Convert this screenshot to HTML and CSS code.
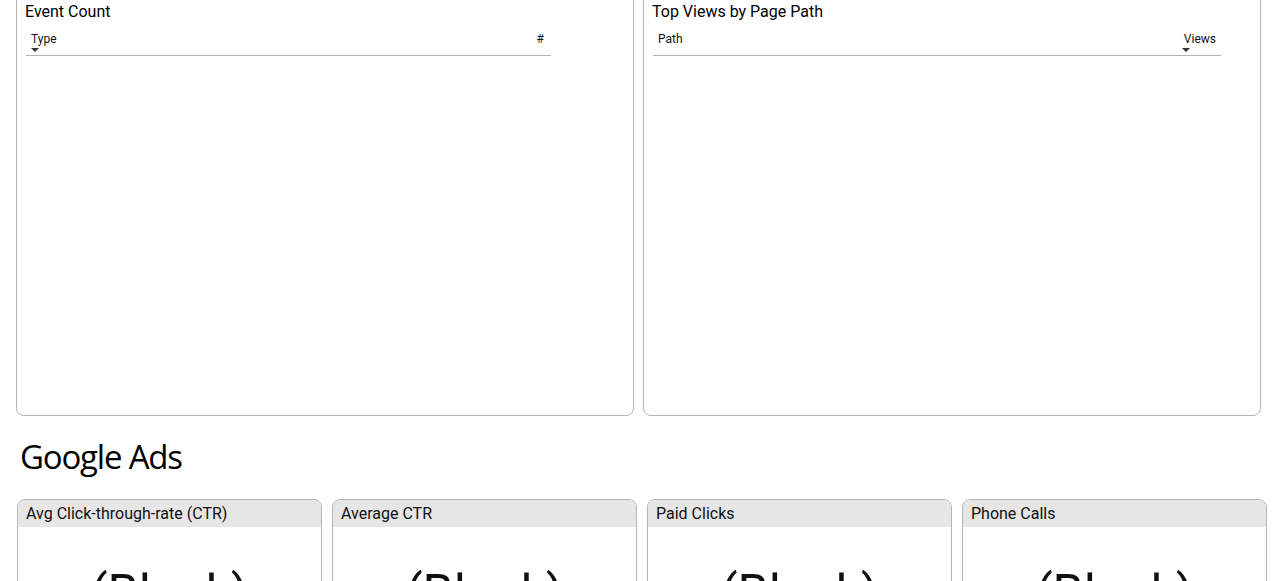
FILE: index.html
```html
<!DOCTYPE html>
<html lang="en">

<head>
    <meta charset="UTF-8">
    <meta name="viewport" content="width=device-width, initial-scale=1.0">
    <title>Dashboard</title>
    <link rel="stylesheet" href="styles.css">
</head>

<body>
    <div class="page">
        <div class="panels">
            <div class="panel">
                <h3 class="panel-title">Event Count</h3>
                <table class="grid grid-events">
                    <thead>
                        <tr>
                            <th class="sorted">Type</th>
                            <th class="num">#</th>
                        </tr>
                    </thead>
                </table>
            </div>
            <div class="panel">
                <h3 class="panel-title">Top Views by Page Path</h3>
                <table class="grid grid-views">
                    <thead>
                        <tr>
                            <th>Path</th>
                            <th class="num sorted">Views</th>
                        </tr>
                    </thead>
                </table>
            </div>
        </div>

        <h2 class="section-heading">Google Ads</h2>

        <div class="cards">
            <div class="card">
                <div class="card-header">Avg Click-through-rate (CTR)</div>
                <div class="card-value">(Blank)</div>
            </div>
            <div class="card">
                <div class="card-header">Average CTR</div>
                <div class="card-value">(Blank)</div>
            </div>
            <div class="card">
                <div class="card-header">Paid Clicks</div>
                <div class="card-value">(Blank)</div>
            </div>
            <div class="card">
                <div class="card-header">Phone Calls</div>
                <div class="card-value">(Blank)</div>
            </div>
        </div>
    </div>
</body>

</html>
```

FILE: styles.css
```css
body {
    margin: 0;
    padding: 0;
    background-color: #fff;
    font-family: Roboto, "Liberation Sans", sans-serif;
    color: #111;
    overflow: hidden;
}

.page {
    margin-top: -7px;
    padding: 0 21px 0 16px;
}

.panels {
    display: grid;
    grid-template-columns: 618px 618px;
    gap: 9px;
}

.panel {
    height: 423px;
    box-sizing: border-box;
    border: 1px solid #b4b4b4;
    border-radius: 8px;
    padding: 8px 8px 0 8px;
}

.panel-title {
    margin: 0;
    font-size: 16px;
    font-weight: 400;
    line-height: 20px;
    color: #000;
}

.grid {
    border-collapse: collapse;
    margin-top: 8px;
    font-size: 12px;
}

.grid-events {
    width: 525px;
    margin-left: 1px;
}

.grid-views {
    width: 568px;
    margin-left: 1px;
}

.grid th {
    text-align: left;
    font-weight: 400;
    padding: 2px 5px 9px 5px;
    line-height: 14px;
    border-bottom: 1px solid #b4b4b4;
    position: relative;
}

.grid th.num {
    text-align: right;
}

.grid-events th.num {
    padding-right: 7px;
}

.sorted::after {
    content: "";
    position: absolute;
    bottom: 3px;
    border-left: 4px solid transparent;
    border-right: 4px solid transparent;
    border-top: 4px solid #333;
}

.grid th.sorted::after {
    left: 5px;
}

.grid th.num.sorted::after {
    left: auto;
    right: 31px;
}

.section-heading {
    margin: 21px 0 0 4px;
    font-family: "Open Sans", sans-serif;
    font-size: 33px;
    font-weight: 400;
    line-height: 40px;
    letter-spacing: -1.2px;
    color: #000;
}

.cards {
    display: grid;
    grid-template-columns: repeat(4, 305px);
    gap: 10px;
    margin-top: 22px;
    margin-left: 1px;
}

.card {
    height: 140px;
    border: 1px solid #b4b4b4;
    border-radius: 8px;
    overflow: hidden;
}

.card-header {
    background-color: #e6e6e6;
    height: 27px;
    line-height: 27px;
    padding-left: 8px;
    font-size: 16px;
}

.card-value {
    text-align: center;
    font-size: 50px;
    line-height: 60px;
    margin-top: 36px;
}
```
